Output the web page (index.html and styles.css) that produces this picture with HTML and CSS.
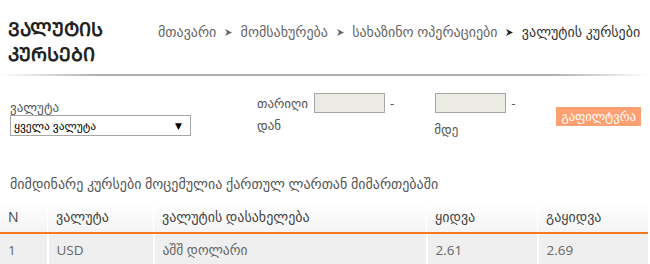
FILE: index.html
```html
<!DOCTYPE html>
<html lang="ka">
<head>
  <meta charset="UTF-8">
  <title>ვალუტის კურსები</title>
  <link rel="stylesheet" href="styles.css">
</head>
<body>

<div class="page-head">
  <h1 class="page-title">ᲕᲐᲚᲣᲢᲘᲡ<br>ᲙᲣᲠᲡᲔᲑᲘ</h1>
  <!-- ნავიგაცია -->
  <div class="crumbs">
    <a href="#">მთავარი</a>
    <svg class="sep" width="7" height="7" viewBox="0 0 7 7"><polygon points="0,0 7,3.5 0,7 2,3.5"/></svg>
    <a href="#">მომსახურება</a>
    <svg class="sep" width="7" height="7" viewBox="0 0 7 7"><polygon points="0,0 7,3.5 0,7 2,3.5"/></svg>
    <a href="#">სახაზინო ოპერაციები</a>
    <svg class="sep last" width="7" height="7" viewBox="0 0 7 7"><polygon points="0,0 7,3.5 0,7 2,3.5"/></svg>
    <span class="current">ვალუტის კურსები</span>
  </div>
</div>
<div class="head-line"></div>

<form class="filter">
  <div class="field">
    <label for="currency">ვალუტა</label>
    <div class="select-box">
      <span>ყველა ვალუტა</span>
      <span class="arrow">▼</span>
    </div>
  </div>

  <div class="field date">
    <div class="date-row">
      <label for="from">თარიღი</label>
      <input type="text" id="from" class="date-input">
      <span class="dash">-</span>
    </div>
    <div class="date-sub">დან</div>
  </div>

  <div class="field date">
    <div class="date-row">
      <input type="text" id="to" class="date-input">
      <span class="dash">-</span>
    </div>
    <div class="date-sub">მდე</div>
  </div>

  <button type="button" class="btn-filter">გაფილტვრა</button>
</form>

<p class="note">მიმდინარე კურსები მოცემულია ქართულ ლართან მიმართებაში</p>

<table class="rates">
  <tr>
    <th class="c-n">N</th>
    <th class="c-code">ვალუტა</th>
    <th class="c-name">ვალუტის დასახელება</th>
    <th class="c-buy">ყიდვა</th>
    <th>გაყიდვა</th>
  </tr>
  <tr>
    <td>1</td>
    <td>USD</td>
    <td>აშშ დოლარი</td>
    <td>2.61</td>
    <td>2.69</td>
  </tr>
</table>

</body>
</html>
```

FILE: styles.css
```css
body {
  margin: 0;
  font-family: "Open Sans", "DejaVu Sans", sans-serif;
  color: #555;
  background: #fff;
}

.page-head {
  display: flex;
  align-items: flex-start;
  padding: 17px 0 0 8px;
  height: 57px;
}

.page-title {
  margin: 0;
  width: 150px;
  flex: none;
  font-family: "DejaVu Sans", sans-serif;
  font-size: 19px;
  font-weight: bold;
  line-height: 25px;
  color: #222;
}

.crumbs {
  white-space: nowrap;
  font-size: 14px;
  padding-top: 5px;
  color: #666;
}

.crumbs a {
  color: #666;
  text-decoration: none;
}

.crumbs .sep {
  margin: 0 5px;
  fill: #666;
  vertical-align: 1px;
}

.crumbs .sep.last {
  fill: #222;
}

.crumbs .current {
  color: #333;
}

.head-line {
  height: 2px;
  background: linear-gradient(to right, #fff, #b0b0b0 15%, #b0b0b0 85%, #fff);
}

.filter {
  display: flex;
  align-items: flex-start;
  padding: 24px 0 0 10px;
  font-size: 13px;
}

.field label {
  display: block;
  line-height: 15px;
}

.select-box {
  box-sizing: border-box;
  width: 181px;
  height: 21px;
  border: 1px solid #a6a6a6;
  display: flex;
  justify-content: space-between;
  align-items: center;
  padding: 0 8px 0 3px;
  color: #000;
  font-size: 11.5px;
}

.select-box .arrow {
  font-size: 9px;
}

.field.date {
  margin-left: 66px;
  margin-top: -7px;
}

.field.date + .field.date {
  margin-left: 40px;
}

.date-row {
  display: flex;
  align-items: center;
  gap: 5px;
}

.date-row label {
  display: inline;
}

.date-input {
  box-sizing: border-box;
  width: 71px;
  height: 20px;
  border: 1px solid #a6a6a6;
  background: #ebebe4;
  margin: 0 0 0 1px;
  padding: 0;
}

.date-sub {
  margin-top: 4px;
  line-height: 16px;
}

.field.date + .field.date .date-sub {
  margin-top: 8px;
}

.btn-filter {
  margin-left: 41px;
  margin-top: 7px;
  background: #ffa073;
  border: 0;
  color: #fff;
  font-family: "DejaVu Sans", sans-serif;
  font-size: 12.5px;
  padding: 0 5px;
  height: 19px;
  line-height: 19px;
}

.note {
  margin: 37px 0 0 10px;
  font-size: 14px;
  color: #555;
}

.rates {
  width: 648px;
  border-collapse: collapse;
  margin-top: 8px;
  font-size: 14px;
}

.rates th {
  font-weight: normal;
  text-align: left;
  height: 31px;
  padding: 0 8px;
  color: #444;
  background: linear-gradient(#fff, #f4f4f4);
  border-bottom: 2px solid #f47920;
  border-left: 1px solid #fff;
}

.rates td {
  height: 31px;
  padding: 0 8px;
  background: #efefef;
  color: #666;
  font-size: 13.5px;
  border-left: 2px solid #fff;
}

.rates th:first-child,
.rates td:first-child {
  border-left: 0;
}

.c-n { width: 31px; }
.c-code { width: 89px; }
.c-name { width: 256px; }
.c-buy { width: 94px; }
```
